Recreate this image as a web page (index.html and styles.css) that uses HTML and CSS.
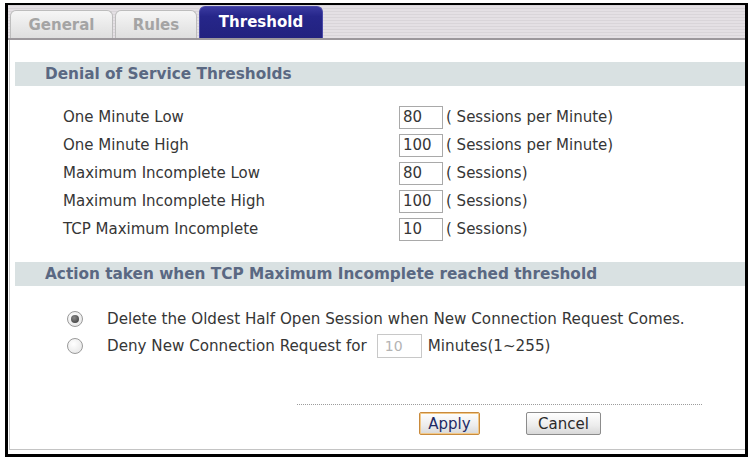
FILE: index.html
```html
<!DOCTYPE html>
<html lang="en">
<head>
    <meta charset="UTF-8">
    <title>Threshold</title>
    <link rel="stylesheet" href="styles.css">
</head>
<body>

    <div class="frame">

        <!-- Tabs -->
        <div class="tabbar">
            <a href="#" class="tab tab-general">General</a>
            <a href="#" class="tab tab-rules">Rules</a>
            <a href="#" class="tab tab-threshold active">Threshold</a>
        </div>

        <div class="content">
            <div class="section-title">Denial of Service Thresholds</div>

            <div class="fields">
                <div class="field-row">
                    <span class="label">One Minute Low</span>
                    <input type="text" class="num" value="80">
                    <span class="unit">( Sessions per Minute)</span>
                </div>
                <div class="field-row">
                    <span class="label">One Minute High</span>
                    <input type="text" class="num" value="100">
                    <span class="unit">( Sessions per Minute)</span>
                </div>
                <div class="field-row">
                    <span class="label">Maximum Incomplete Low</span>
                    <input type="text" class="num" value="80">
                    <span class="unit">( Sessions)</span>
                </div>
                <div class="field-row">
                    <span class="label">Maximum Incomplete High</span>
                    <input type="text" class="num" value="100">
                    <span class="unit">( Sessions)</span>
                </div>
                <div class="field-row">
                    <span class="label">TCP Maximum Incomplete</span>
                    <input type="text" class="num" value="10">
                    <span class="unit">( Sessions)</span>
                </div>
            </div>

            <div class="section-title">Action taken when TCP Maximum Incomplete reached threshold</div>

            <div class="options">
                <label class="option-row">
                    <input type="radio" name="action" class="radio" checked>
                    <span>Delete the Oldest Half Open Session when New Connection Request Comes.</span>
                </label>
                <label class="option-row">
                    <input type="radio" name="action" class="radio">
                    <span>Deny New Connection Request for</span>
                    <input type="text" class="num num-off" value="10" disabled>
                    <span class="minutes">Minutes(1~255)</span>
                </label>
            </div>

            <div class="divider"></div>

            <div class="buttons">
                <button class="btn btn-apply">Apply</button>
                <button class="btn btn-cancel">Cancel</button>
            </div>
        </div>

    </div>

</body>
</html>
```

FILE: styles.css
```css
* {
    margin: 0;
    padding: 0;
    box-sizing: border-box;
    font-family: "DejaVu Sans", Verdana, sans-serif;
}

body {
    background: #ffffff;
    color: #363636;
    font-size: 15px;
}

/* Bingkai luar */
.frame {
    margin: 3px 0 0 5px;
    width: 743px;
    height: 454px;
    border: 3px solid #000000;
    border-top-width: 2px;
    display: flex;
    flex-direction: column;
}

/* Tab */
.tabbar {
    height: 35px;
    display: flex;
    align-items: flex-end;
    gap: 2px;
    padding-left: 2px;
    background: repeating-linear-gradient(#d9d5d9 0 1px, #e4e0e4 1px 3px);
    border-bottom: 2px solid #9c989c;
}

.tab {
    height: 28px;
    display: flex;
    align-items: center;
    justify-content: center;
    font-size: 15px;
    font-weight: bold;
    text-decoration: none;
    color: #a4a4a4;
    background: linear-gradient(#f6f6f6, #dedede);
    border: 1px solid #bdbdbd;
    border-bottom: none;
    border-radius: 6px 6px 0 0;
}

.tab-general {
    width: 103px;
}

.tab-rules {
    width: 82px;
}

.tab-threshold {
    width: 124px;
}

.tab.active {
    height: 32px;
    color: #ffffff;
    background: linear-gradient(#3a3aa0, #26268a 30%, #22227f);
    border-color: #4a4aa8;
    padding-bottom: 2px;
}

/* Konten */
.content {
    flex: 1;
    margin: 0 0 4px 1px;
    border-left: 1px solid #c4c4c4;
    border-bottom: 1px solid #c4c4c4;
    padding: 22px 0 0 5px;
}

.section-title {
    height: 24px;
    line-height: 24px;
    padding-left: 30px;
    background: #d9e1e2;
    color: #5a6882;
    font-size: 15.3px;
    font-weight: bold;
}

.fields {
    padding: 17px 0 19px;
}

.field-row {
    height: 28px;
    display: flex;
    align-items: center;
}

.label {
    width: 384px;
    padding-left: 48px;
}

.num {
    width: 44px;
    height: 23px;
    border: 1px solid #a9a9a9;
    padding-left: 3px;
    font-size: 15px;
    color: #363636;
    background: #ffffff;
}

.unit {
    margin-left: 3px;
}

/* Pilihan radio */
.options {
    padding-top: 19px;
}

.option-row {
    height: 27px;
    display: flex;
    align-items: center;
    padding-left: 52px;
    font-size: 15.15px;
}

.radio {
    appearance: none;
    width: 16px;
    height: 16px;
    margin-right: 24px;
    border: 1px solid #9a9a9a;
    border-radius: 50%;
    background: radial-gradient(circle at 40% 35%, #ffffff, #e2e2e2);
    position: relative;
}

.radio:checked::after {
    content: "";
    position: absolute;
    left: 3px;
    top: 3px;
    width: 8px;
    height: 8px;
    border-radius: 50%;
    background: radial-gradient(circle at 40% 35%, #8a8a8a, #333333);
}

.num-off {
    width: 45px;
    height: 24px;
    margin-left: 10px;
    color: #b4b4b4;
    border-color: #c8c8c8;
    font-size: 14px;
    padding-left: 7px;
}

.minutes {
    margin-left: 6px;
}

.divider {
    margin: 45px 0 0 282px;
    width: 405px;
    border-top: 1px dotted #9c9c9c;
}

/* Tombol */
.buttons {
    margin: 7px 0 0 404px;
    display: flex;
    gap: 46px;
}

.btn {
    height: 23px;
    font-size: 15px;
    border-radius: 2px;
    background: linear-gradient(#ffffff, #ececec 60%, #d8d8d8);
    cursor: pointer;
}

.btn-apply {
    width: 61px;
    color: #1e2a66;
    border: 1px solid #c98a3c;
    box-shadow: inset 0 0 0 1px #f1c98a;
}

.btn-cancel {
    width: 75px;
    color: #2a2a2a;
    border: 1px solid #8c8c8c;
}
```
